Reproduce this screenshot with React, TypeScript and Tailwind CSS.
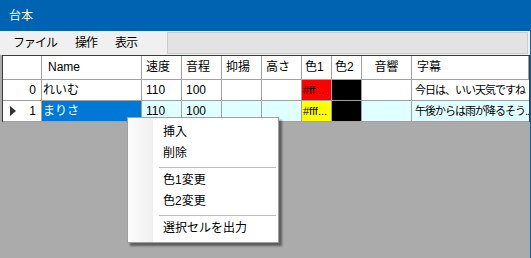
const cols = [
  { key: "no", label: "", w: "w-[39px]", align: "text-right pr-[5px]" },
  { key: "name", label: "Name", w: "w-[100px]", align: "pl-[6px]" },
  { key: "speed", label: "速度", w: "w-[40px]", align: "pl-[4px]" },
  { key: "pitch", label: "音程", w: "w-[40px]", align: "pl-[4px]" },
  { key: "inton", label: "抑揚", w: "w-[40px]", align: "pl-[4px]" },
  { key: "height", label: "高さ", w: "w-[40px]", align: "pl-[4px]" },
  { key: "c1", label: "色1", w: "w-[30px]", align: "pl-[3px]" },
  { key: "c2", label: "色2", w: "w-[30px]", align: "pl-[3px]" },
  { key: "snd", label: "音響", w: "w-[50px]", align: "text-center" },
  { key: "sub", label: "字幕", w: "flex-1", align: "pl-[5px]" },
];

const rows = [
  { no: "0", name: "れいむ", speed: "110", pitch: "100", c1: "#ff...", c1bg: "bg-[#ff0000]", sub: "今日は、いい天気ですね", selected: false },
  { no: "1", name: "まりさ", speed: "110", pitch: "100", c1: "#fff...", c1bg: "bg-[#ffff00]", sub: "午後からは雨が降るそう...", selected: true },
];

function ContextMenu() {
  return (
    <div className="absolute left-[127px] top-[117px] w-[152px] h-[126px] bg-white border border-[#a0a0a0] shadow-[3px_3px_2px_rgba(0,0,0,0.45)] flex">
      <div className="w-[25px] bg-gradient-to-r from-[#fcfcfc] to-[#f0f0f0]" />
      <div className="flex-1 flex flex-col pt-[4px] text-black">
        <div className="h-[21px] pl-[10px] leading-[21px]">挿入</div>
        <div className="h-[21px] pl-[10px] leading-[21px]">削除</div>
        <div className="h-[6px] flex items-center pl-[6px] pr-[2px]"><div className="h-px w-full bg-[#bdbdbd]" /></div>
        <div className="h-[21px] pl-[10px] leading-[21px]">色1変更</div>
        <div className="h-[21px] pl-[10px] leading-[21px]">色2変更</div>
        <div className="h-[6px] flex items-center pl-[6px] pr-[2px]"><div className="h-px w-full bg-[#bdbdbd]" /></div>
        <div className="h-[21px] pl-[10px] leading-[21px]">選択セルを出力</div>
      </div>
    </div>
  );
}

export default function App() {
  return (
    <div
      className="relative w-[531px] h-[258px] overflow-hidden bg-[#0063b1] text-[12px]"
      style={{ fontFamily: '"Liberation Sans", "Noto Sans CJK JP", sans-serif' }}
    >
      <div className="h-[31px] pl-[9px] flex items-center text-white text-[12px]">台本</div>
      <div className="absolute left-0 right-[1px] top-[31px] bottom-0 flex flex-col bg-[#ababab]">
        <div className="h-[24px] bg-[#f0f0f0] flex items-center">
          <div className="flex items-center w-[167px] pl-[7px] tracking-[-1px]">
            <span className="px-[6px]">ファイル</span>
            <span className="pl-[12px] pr-[8px]">操作</span>
            <span className="pl-[10px]">表示</span>
          </div>
          <div className="flex-1 h-[22px] mr-[2px] bg-[#e3e3e3] border border-[#cccccc]" />
        </div>
        <div className="ml-[2px] border-l border-t border-r border-[#3c3c3c] flex flex-col">
          <div className="flex h-[24px] bg-white">
            {cols.map((c) => (
              <div
                key={c.key}
                className={`${c.w} shrink-0 h-full border-r border-b border-[#a0a0a0] leading-[23px] whitespace-nowrap overflow-hidden ${c.align}`}
              >
                {c.label}
              </div>
            ))}
          </div>
          {rows.map((r) => {
            const bg = r.selected ? "bg-[#e0ffff]" : "bg-white";
            return (
              <div key={r.no} className="flex h-[21px]">
                <div className="w-[39px] shrink-0 relative bg-white border-r border-b border-[#a0a0a0] text-right pr-[5px] leading-[20px]">
                  {r.selected && (
                    <svg className="absolute left-[7px] top-[5px]" width="6" height="10" viewBox="0 0 6 10">
                      <path d="M0 0 L6 5 L0 10 Z" fill="#333" />
                    </svg>
                  )}
                  {r.no}
                </div>
                <div className={`w-[100px] shrink-0 border-r border-b border-[#a0a0a0] pl-[1px] leading-[20px] ${r.selected ? "bg-[#0078d7] text-white" : "bg-white"}`}>{r.name}</div>
                <div className={`w-[40px] shrink-0 border-r border-b border-[#a0a0a0] pl-[4px] leading-[20px] ${bg}`}>{r.speed}</div>
                <div className={`w-[40px] shrink-0 border-r border-b border-[#a0a0a0] pl-[4px] leading-[20px] ${bg}`}>{r.pitch}</div>
                <div className={`w-[40px] shrink-0 border-r border-b border-[#a0a0a0] ${bg}`} />
                <div className={`w-[40px] shrink-0 border-r border-b border-[#a0a0a0] ${bg}`} />
                <div className={`w-[30px] shrink-0 border-r border-b border-[#a0a0a0] pl-[1px] leading-[20px] text-[11px] whitespace-nowrap overflow-hidden ${r.c1bg}`}>{r.c1}</div>
                <div className="w-[30px] shrink-0 border-r border-b border-[#a0a0a0] bg-black" />
                <div className={`w-[50px] shrink-0 border-r border-b border-[#a0a0a0] ${bg}`} />
                <div className={`flex-1 min-w-0 border-b border-[#a0a0a0] pl-[3px] leading-[20px] text-[11px] tracking-[-1px] whitespace-nowrap overflow-hidden ${bg}`}>{r.sub}</div>
              </div>
            );
          })}
        </div>
      </div>
      <ContextMenu />
    </div>
  );
}
